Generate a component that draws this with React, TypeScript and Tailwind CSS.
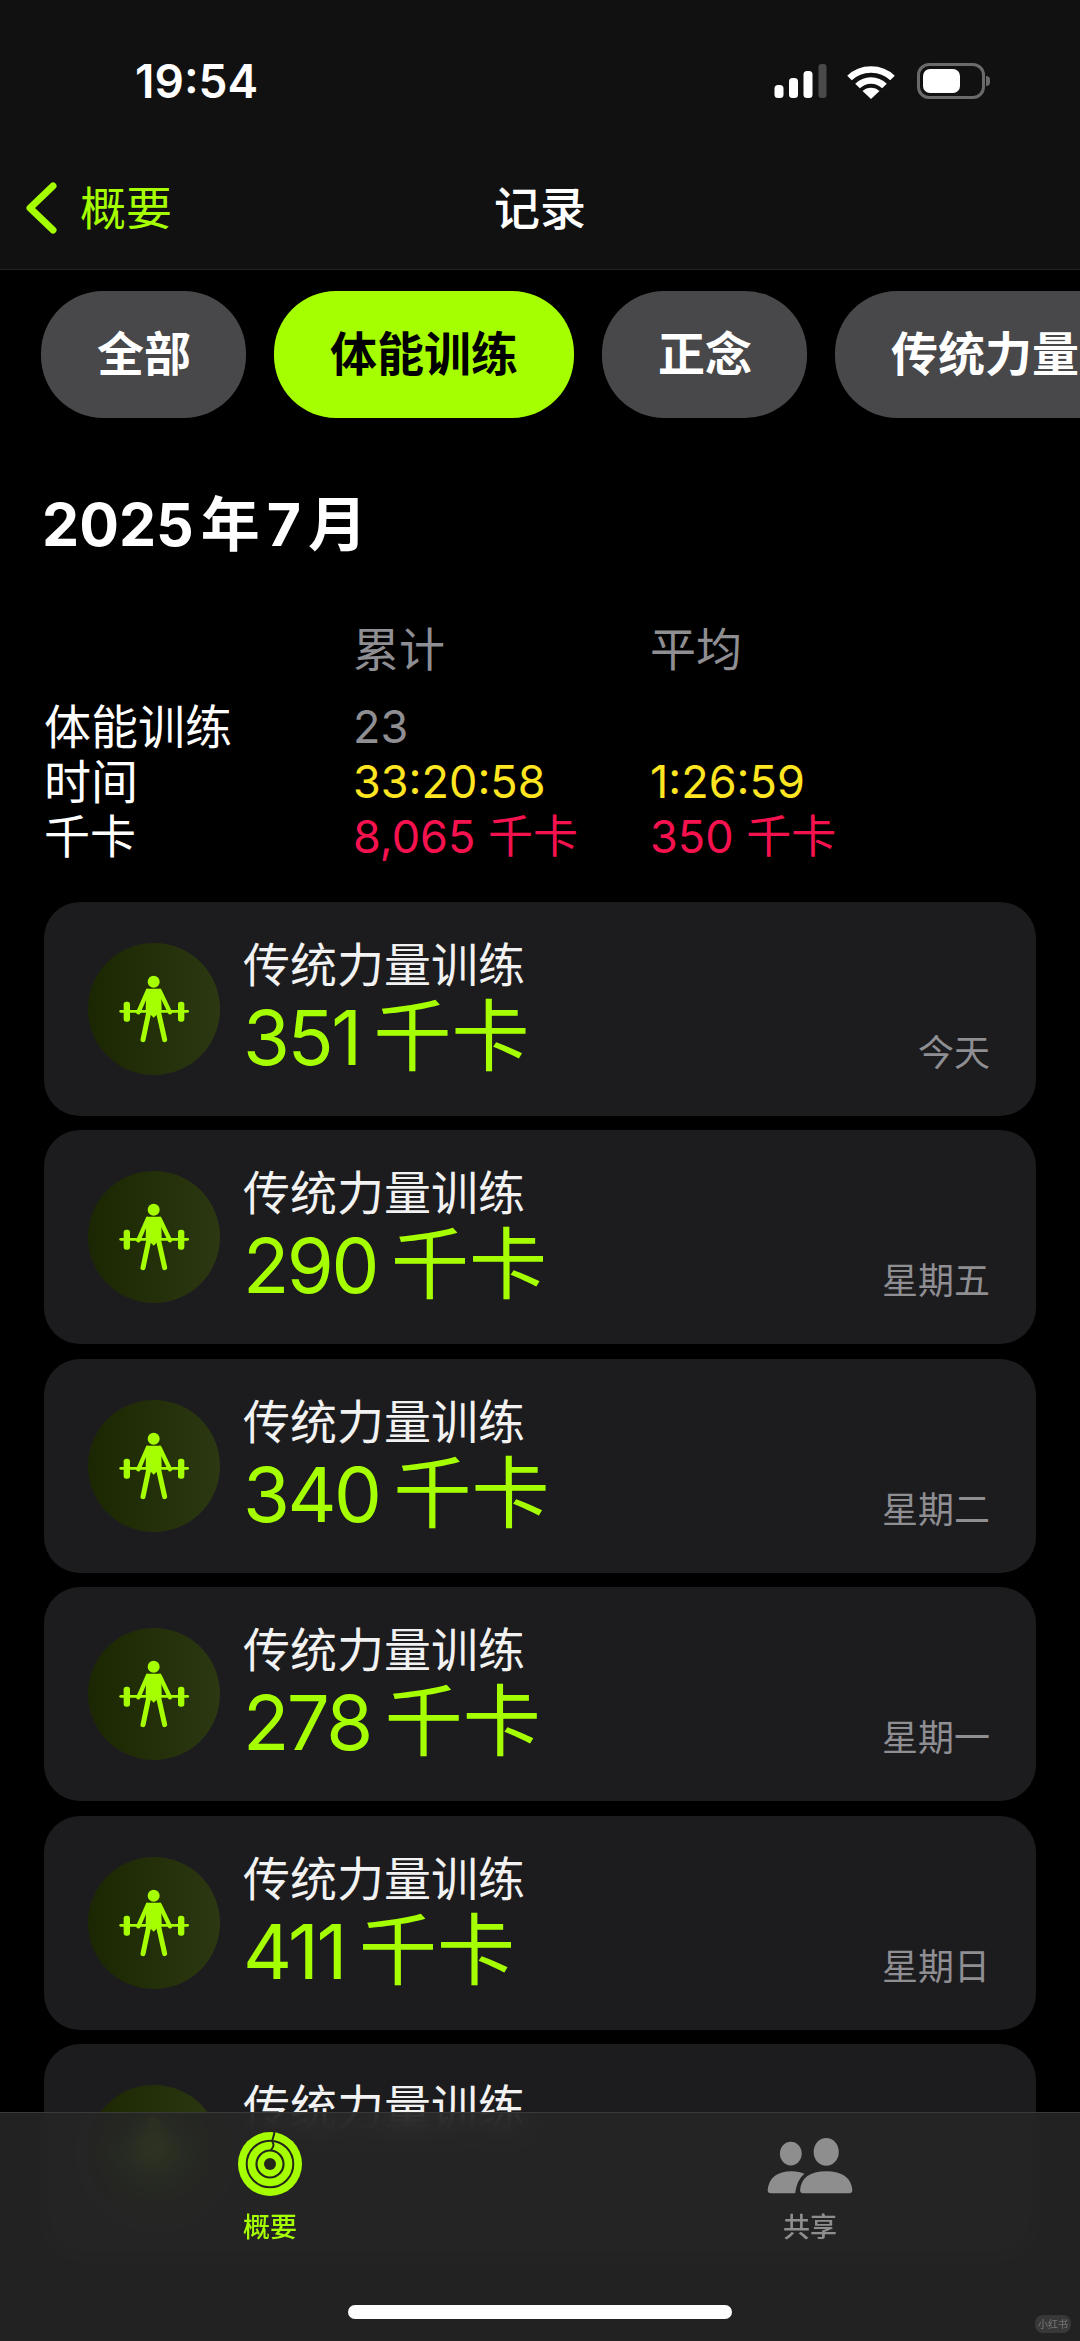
import React from 'react';

const SANS = "font-['Inter','Noto_Sans_CJK_SC',sans-serif]";

const workouts = [
  { kcal: '351', day: '今天' },
  { kcal: '290', day: '星期五' },
  { kcal: '340', day: '星期二' },
  { kcal: '278', day: '星期一' },
  { kcal: '411', day: '星期日' },
];

const filters = [
  { label: '全部', width: 'w-[205px]' },
  { label: '体能训练', width: 'w-[300px]', active: true },
  { label: '正念', width: 'w-[205px]' },
  { label: '传统力量', width: 'w-[390px]' },
];

const LifterIcon = () => (
  <svg viewBox="55 40 396 396" className="h-[132px] w-[132px]" fill="#a6ff00" stroke="#a6ff00">
    <circle cx="252" cy="156" r="18" stroke="none" />
    <path d="M230 177 H274 L276 240 L252 264 L228 240 Z" stroke="none" />
    <path d="M234 184 L206 248 M270 184 L301 248" strokeWidth="13" strokeLinecap="round" fill="none" />
    <path d="M238 245 L220 330 M266 245 L285 330" strokeWidth="15" strokeLinecap="round" fill="none" />
    <path d="M153 245 H354" strokeWidth="8" strokeLinecap="round" fill="none" />
    <rect x="162" y="216" width="19" height="60" rx="8" stroke="none" />
    <rect x="325" y="216" width="19" height="60" rx="8" stroke="none" />
  </svg>
);

const RingsIcon = () => (
  <svg viewBox="-32 -32 64 64" className="h-[64px] w-[64px]">
    <circle r="32" fill="#a6ff00" />
    <circle r="23.3" fill="none" stroke="#23271a" strokeWidth="2" />
    <circle r="13.5" fill="none" stroke="#23271a" strokeWidth="2.2" />
    <circle r="6" fill="#23271a" />
    <path d="M4.3 -32 C4.5 -27 1 -25 3 -21 C5 -17 1 -15 0.5 -13" fill="none" stroke="#23271a" strokeWidth="2" />
  </svg>
);

const FriendsIcon = () => (
  <svg viewBox="50 75 260 175" className="h-[58px] w-[86px]" fill="#8e8e8e">
    <ellipse cx="122" cy="125" rx="33" ry="36" />
    <ellipse cx="229" cy="120" rx="38" ry="42" />
    <path d="M52 235 Q58 178 125 178 Q148 178 163 186 Q140 205 135 245 H62 Q52 245 52 235 Z" />
    <path d="M150 235 Q155 178 229 178 Q302 178 308 235 Q308 245 298 245 H160 Q150 245 150 235 Z" />
  </svg>
);

const StatusIcons = () => (
  <div className="flex items-center">
    <svg viewBox="0 0 52 34" className="h-[34px] w-[53px]">
      <rect x="0" y="21" width="9" height="13" rx="3.5" fill="#fff" />
      <rect x="14.5" y="14" width="9" height="20" rx="3.5" fill="#fff" />
      <rect x="29" y="7" width="9" height="27" rx="3.5" fill="#fff" />
      <rect x="44" y="0" width="8" height="34" rx="3" fill="#4a4a4a" />
    </svg>
    <svg viewBox="0 0 48 35" className="ml-[20px] h-[35px] w-[48px]" fill="none" stroke="#fff" strokeWidth="6.5">
      <path d="M2.5 14 C14 2.5 34 2.5 45.5 14" />
      <path d="M10.5 22 C18 14.5 30 14.5 37.5 22" />
      <path d="M24 35 L15.5 27 C20 22.5 28 22.5 32.5 27 Z" fill="#fff" stroke="none" />
    </svg>
    <div className="ml-[22px] flex items-center">
      <div className="h-[36px] w-[68px] rounded-[12px] border-[3px] border-[#6a6a6a] p-[3px] pr-[22px]">
        <div className="h-full w-full rounded-[7px] bg-white" />
      </div>
      <div className="ml-[1px] h-[10px] w-[4px] rounded-r-full bg-[#6a6a6a]" />
    </div>
  </div>
);

const WorkoutCard = ({ kcal, day }: { kcal?: string; day?: string }) => (
  <div className="flex h-[214px] shrink-0 items-start rounded-[36px] bg-[#1c1c1e] pl-[44px] pr-[46px]">
    <div className="mt-[41px] flex h-[132px] w-[132px] shrink-0 items-center justify-center rounded-full bg-linear-to-r from-[#1b2702] to-[#2b3812]">
      <LifterIcon />
    </div>
    <div className="ml-[23px] flex-1 pt-[35px]">
      <p className="text-[47px] leading-[56px] text-[#f2f2f2]">传统力量训练</p>
      {kcal && (
        <p className="mt-[2px] text-[78px] leading-[84px] text-[#a6ff00] [word-spacing:-8px]">
          <span className="text-[76px] tracking-[-2.5px]">{kcal}</span> 千卡
        </p>
      )}
    </div>
    {day && <p className="mt-[129px] text-[36px] leading-[44px] text-[#8e8e93]">{day}</p>}
  </div>
);

export default function App() {
  return (
    <div className={`relative h-[2341px] w-[1080px] overflow-hidden bg-black text-white ${SANS}`}>
      <header className="h-[270px] border-b border-[#222] bg-[#111]">
        <div className="flex items-center justify-between pl-[135px] pr-[90px] pt-[58px]">
          <span className="text-[46px] font-semibold leading-[46px]">19:54</span>
          <StatusIcons />
        </div>
        <div className="mt-[76px] grid grid-cols-3 items-center">
          <div className="flex items-center pl-[25px]">
            <svg viewBox="0 0 32 52" className="h-[52px] w-[32px]" fill="none" stroke="#a6ff00" strokeWidth="7" strokeLinecap="round" strokeLinejoin="round">
              <path d="M28 4 L5 26 L28 48" />
            </svg>
            <span className="ml-[23px] text-[46px] leading-[56px] text-[#a6ff00]">概要</span>
          </div>
          <h1 className="text-center text-[46px] font-medium leading-[56px]">记录</h1>
        </div>
      </header>

      <div className="mt-[21px] flex gap-[28px] overflow-hidden pl-[41px]">
        {filters.map((f) => (
          <div
            key={f.label}
            className={`flex h-[127px] shrink-0 items-center rounded-[62px] pl-[56px] text-[47px] font-semibold ${f.width} ${
              f.active ? 'bg-[#a6ff00] text-black' : 'bg-[#48484a] text-white'
            }`}
          >
            <span className="whitespace-nowrap">{f.label}</span>
          </div>
        ))}
      </div>

      <h2 className="ml-[42px] mt-[69px] text-[59px] font-bold leading-[76px] [word-spacing:-7px]">2025 年 7 月</h2>

      <div className="ml-[44px] mt-[59px] grid grid-cols-[309px_297px_1fr] text-[45px] leading-[55px]">
        <span />
        <span className="text-[46px] text-[#8e8e93]">累计</span>
        <span className="text-[46px] text-[#8e8e93]">平均</span>
        <span className="mt-[22px] text-[47px]">体能训练</span>
        <span className="mt-[22px] text-[#8e8e93]">23</span>
        <span className="mt-[22px]" />
        <span className="text-[47px]">时间</span>
        <span className="text-[#ffe620]">33:20:58</span>
        <span className="text-[#ffe620]">1:26:59</span>
        <span className="text-[46px]">千卡</span>
        <span className="text-[#f5124f]">8,065 千卡</span>
        <span className="text-[#f5124f]">350 千卡</span>
      </div>

      <div className="mx-[44px] mt-[38px] flex flex-col gap-[14.4px]">
        {workouts.map((w) => (
          <WorkoutCard key={w.kcal} kcal={w.kcal} day={w.day} />
        ))}
        <WorkoutCard />
      </div>

      {/* tab bar floats over the scrolling list */}
      <nav className="absolute bottom-0 left-0 right-0 h-[229px] border-t border-[#3a3a3a] bg-[#262626]/90 backdrop-blur-md">
        <div className="grid grid-cols-2 pt-[19px]">
          <div className="flex flex-col items-center">
            <RingsIcon />
            <span className="mt-[14px] text-[27px] font-medium leading-[36px] text-[#a6ff00]">概要</span>
          </div>
          <div className="flex flex-col items-center">
            <div className="flex h-[64px] items-end pb-[1px]">
              <FriendsIcon />
            </div>
            <span className="mt-[14px] text-[27px] font-medium leading-[36px] text-[#8e8e8e]">共享</span>
          </div>
        </div>
        <div className="absolute bottom-[22px] left-[348px] h-[14px] w-[384px] rounded-full bg-white" />
        <div className="absolute bottom-[8px] right-[9px] flex h-[18px] w-[36px] items-center justify-center rounded-[8px] bg-white/10 text-[10px] leading-none text-white/30">
          小红书
        </div>
      </nav>
    </div>
  );
}
